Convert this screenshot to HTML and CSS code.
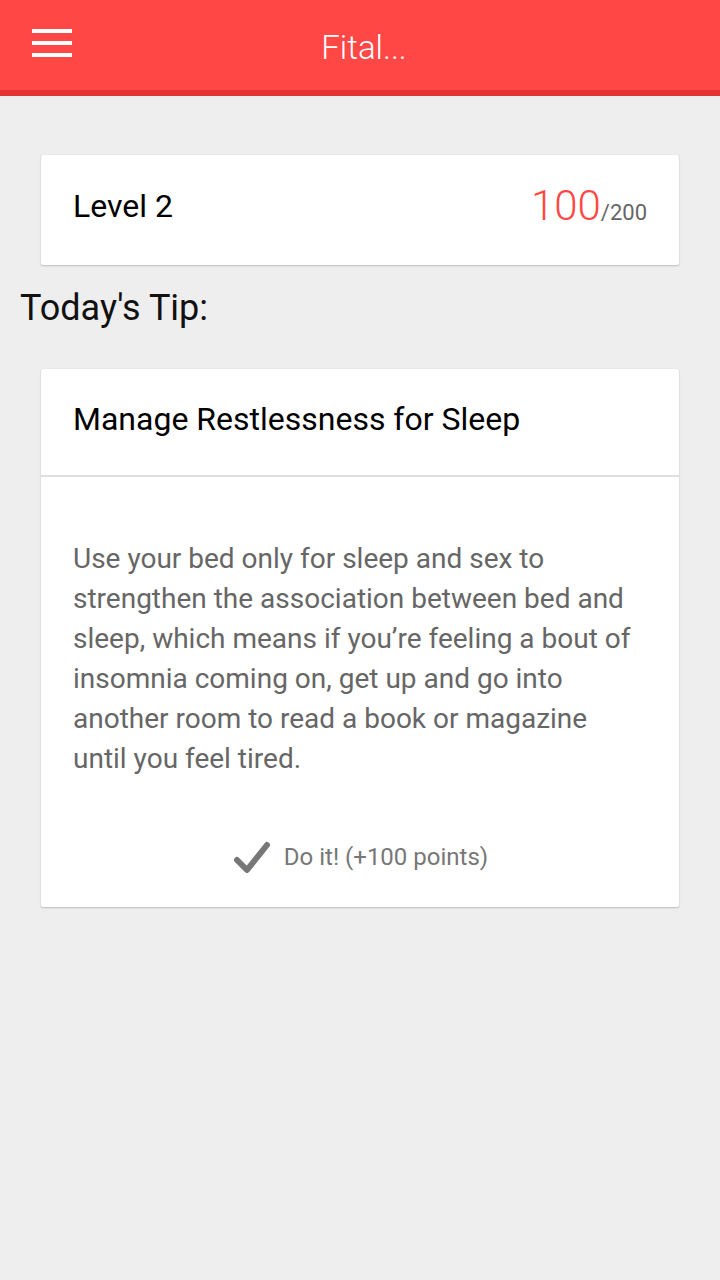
FILE: index.html
```html
<!DOCTYPE html>
<html>
<head>
<meta charset="utf-8">
<link rel="stylesheet" href="styles.css">
</head>
<body>
<header class="appbar">
  <div class="menu">
    <span class="bar"></span><span class="bar"></span><span class="bar"></span>
  </div>
  <div class="title">Fital...</div>
</header>
<main class="content">
  <section class="card level">
    <div class="level-name">Level 2</div>
    <div class="score"><span class="points">100</span><span class="total">/200</span></div>
  </section>
  <h2 class="tip-heading">Today's Tip:</h2>
  <section class="card tip">
    <div class="tip-title">Manage Restlessness for Sleep</div>
    <div class="tip-body">
      <p class="tip-text">Use your bed only for sleep and sex to strengthen the association between bed and sleep, which means if you’re feeling a bout of insomnia coming on, get up and go into another room to read a book or magazine until you feel tired.</p>
      <div class="do-it">
        <svg class="check" viewBox="0 0 40 40" width="40" height="40"><path d="M5 23 L15 33 L35 8" fill="none" stroke="#777777" stroke-width="6" stroke-linecap="round" stroke-linejoin="round"/></svg>
        <span class="do-label">Do it! (+100 points)</span>
      </div>
    </div>
  </section>
</main>
</body>
</html>
```
FILE: styles.css
```css
* { box-sizing: border-box; }
html, body { margin: 0; padding: 0; }
body {
  background: #eeeeee;
  font-family: Roboto, "Noto Sans", sans-serif;
  width: 720px;
  height: 1280px;
  overflow: hidden;
}
.appbar {
  height: 96px;
  background: #ff4745;
  border-bottom: 6px solid #e43432;
  position: relative;
  display: flex;
  align-items: center;
  justify-content: center;
}
.menu {
  position: absolute;
  left: 32px;
  top: 29px;
  width: 40px;
  display: flex;
  flex-direction: column;
  gap: 8px;
}
.bar {
  display: block;
  height: 4px;
  background: #ffffff;
}
.title {
  color: #ffffff;
  font-size: 33px;
  font-weight: 300;
  margin-top: 4px;
  margin-left: 8px;
}
.content {
  padding: 59px 41px 0 41px;
}
.card {
  background: #ffffff;
  border-radius: 2px;
  box-shadow: 0 1px 2px rgba(0,0,0,0.2), 0 0 1px rgba(0,0,0,0.15);
}
.level {
  height: 110px;
  display: flex;
  align-items: center;
  justify-content: space-between;
  padding: 0 32px 9px;
}
.level-name {
  font-size: 32px;
  color: #000000;
}
.score { display: flex; align-items: baseline; }
.points {
  font-size: 42px;
  color: #ff4745;
  font-weight: 300;
}
.total {
  font-size: 22px;
  color: #666666;
}
.tip-heading {
  margin: 22px 0 40px -21px;
  font-size: 36px;
  font-weight: 400;
  color: #111111;
  line-height: 42px;
}
.tip-title {
  height: 108px;
  display: flex;
  align-items: center;
  padding: 0 32px 6px;
  font-size: 32px;
  color: #000000;
  border-bottom: 2px solid #e0e0e0;
}
.tip-body {
  padding: 62px 32px 30px;
}
.tip-text {
  margin: 0;
  font-size: 28px;
  line-height: 40px;
  color: #666666;
}
.do-it {
  margin-top: 58px;
  display: flex;
  align-items: center;
  justify-content: center;
  gap: 12px;
}
.check { display: block; }
.do-label {
  font-size: 24px;
  color: #777777;
}
```
